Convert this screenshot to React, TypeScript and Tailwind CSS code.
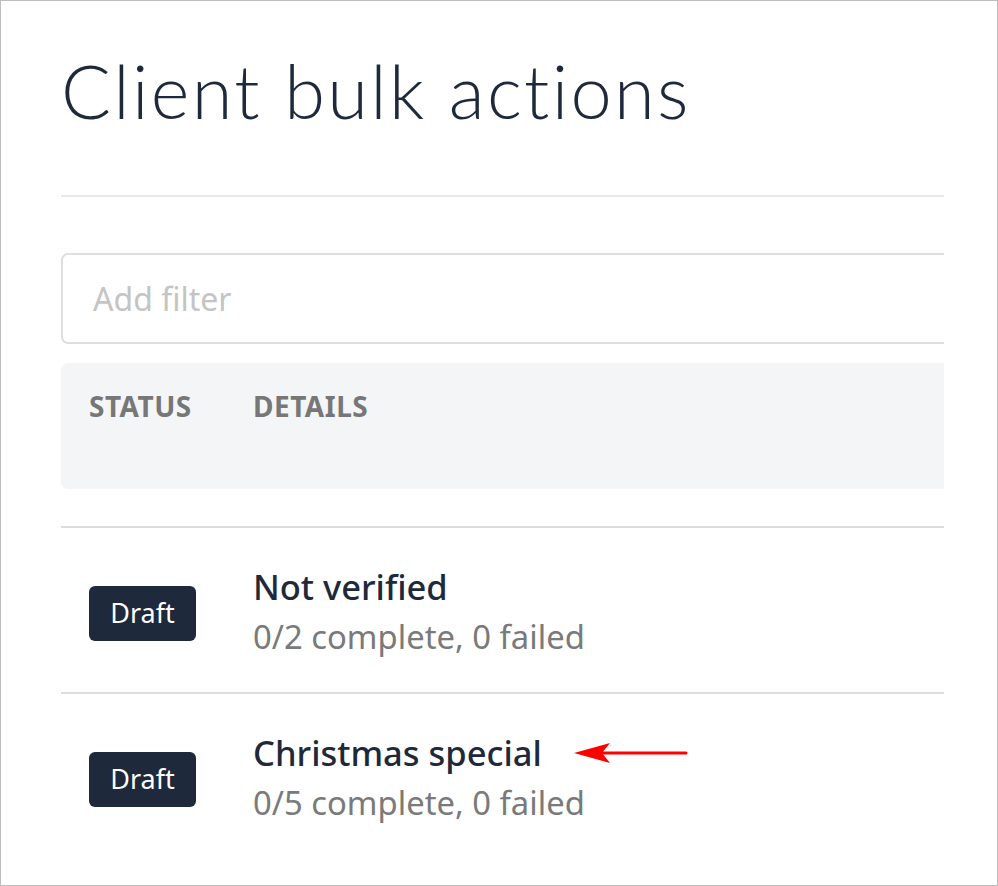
import React from "react";

const body = { fontFamily: '"Noto Sans", "Open Sans", sans-serif' };

interface BulkAction {
  name: string;
  total: number;
  done: number;
  failed: number;
  marked?: boolean;
}

const actions: BulkAction[] = [
  { name: "Not verified", total: 2, done: 0, failed: 0 },
  { name: "Christmas special", total: 5, done: 0, failed: 0, marked: true },
];

function Arrow() {
  return (
    <svg width="118" height="24" viewBox="0 0 118 24" className="ml-[30px]">
      <line x1="30" y1="12" x2="114" y2="12" stroke="#f00" strokeWidth="3" strokeLinecap="round" />
      <path d="M2 12 L38 2 L30 12 L38 22 Z" fill="#f00" />
    </svg>
  );
}

function Row({ item }: { item: BulkAction }) {
  return (
    <div className="flex h-[166px] items-center border-t-2 border-[#dcdcdc]">
      <div className="w-[192px] shrink-0 pl-[28px] pt-[6px]">
        <span className="inline-flex h-[55px] w-[107px] items-center justify-center rounded-[6px] bg-[#1e293b] text-[27px] text-white">
          Draft
        </span>
      </div>
      <div className="pt-[4px]">
        <div className="flex items-center">
          <span className="text-[34.5px] font-medium leading-[50px] text-[#1e293b]">{item.name}</span>
          {item.marked && <Arrow />}
        </div>
        <div className="text-[32.8px] leading-[50px] text-[#7a7a7a]">
          {item.done}/{item.total} complete, {item.failed} failed
        </div>
      </div>
    </div>
  );
}

export default function App() {
  return (
    <div className="h-[886px] w-[998px] overflow-hidden border border-[#bdbdbd] bg-white" style={body}>
      <div className="ml-[60px] w-[883px] overflow-hidden">
        <div className="w-[930px]">
          <h1
            className="pt-[48px] text-[74px] font-light leading-[84px] tracking-[2.3px] text-[#1e293b]"
            style={{ fontFamily: 'Lato, "Open Sans", sans-serif' }}
          >
            Client bulk actions
          </h1>
          <div className="mt-[62px] h-[2px] bg-[#e8e8e8]" />
          <div className="mt-[56px] flex h-[91px] items-center rounded-[7px] border-2 border-[#dedede] px-[30px] text-[32px] text-[#c4c4c4]">
            Add filter
          </div>
          <div className="mt-[19px] flex h-[126px] rounded-[7px] bg-[#f4f5f7] pt-[22px] text-[28px] font-bold tracking-[0.5px] text-[#777777]">
            <div className="w-[192px] pl-[28px]">STATUS</div>
            <div>DETAILS</div>
          </div>
          <div className="mt-[37px]">
            {actions.map((a) => (
              <Row key={a.name} item={a} />
            ))}
          </div>
        </div>
      </div>
    </div>
  );
}
